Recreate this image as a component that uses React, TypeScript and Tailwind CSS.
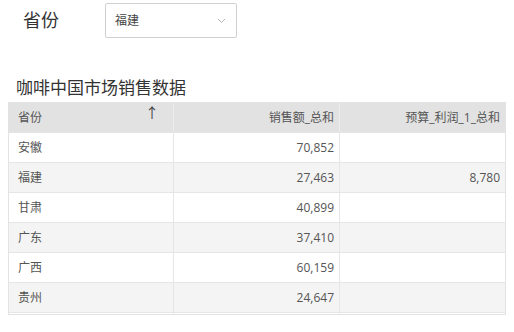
import React from 'react'

const rows = [
  { name: '安徽', sales: '70,852', budget: '' },
  { name: '福建', sales: '27,463', budget: '8,780' },
  { name: '甘肃', sales: '40,899', budget: '' },
  { name: '广东', sales: '37,410', budget: '' },
  { name: '广西', sales: '60,159', budget: '' },
  { name: '贵州', sales: '24,647', budget: '' },
  { name: '', sales: '', budget: '' },
]

const font = { fontFamily: '"Open Sans", "Noto Sans CJK SC", sans-serif' }

export default function App() {
  return (
    <div className="w-[514px] h-[332px] bg-white text-[#333] overflow-hidden" style={font}>
      {/* Filter */}
      <div className="flex items-center pt-[3px] h-[38px]">
        <span className="ml-[23px] w-[82px] text-[18px] text-[#333]">省份</span>
        <div className="flex items-center justify-between w-[132px] h-[35px] border border-[#d0d0d0] rounded-[2px] pl-[9px] pr-[9px]">
          <span className="text-[12px] text-[#444]">福建</span>
          <svg width="9" height="6" viewBox="0 0 9 6" className="mr-[1px]">
            <path d="M1 1l3.5 3.5L8 1" fill="none" stroke="#b5b5b5" strokeWidth="1" />
          </svg>
        </div>
      </div>

      {/* Title */}
      <div className="ml-[16px] mt-[37px] h-[26px] text-[17px] leading-[26px] text-[#333]">咖啡中国市场销售数据</div>

      {/* Table */}
      <div className="ml-[8px] mt-[1px] w-[498px] h-[213px] border border-[#e3e3e3] overflow-hidden text-[12px] text-[#555]">
        <div className="grid grid-cols-[165px_166px_1fr] h-[30px] bg-[#e2e2e2] border-b border-[#e6e6e6]">
          <div className="relative flex items-center pl-[9px] border-r border-[#ececec]">
            省份
            <span className="absolute right-[14px] top-[-1px] text-[14px] text-[#444]">↑</span>
          </div>
          <div className="flex items-center justify-end pr-[5px] border-r border-[#ececec]">销售额_总和</div>
          <div className="flex items-center justify-end pr-[5px]">预算_利润_1_总和</div>
        </div>
        {rows.map((r, i) => (
          <div
            key={i}
            className={`grid grid-cols-[165px_166px_1fr] h-[30px] border-b border-[#e6e6e6] ${i % 2 === 1 ? 'bg-[#f4f4f4]' : 'bg-white'}`}
          >
            <div className="flex items-center pl-[9px] border-r border-[#e6e6e6]">{r.name}</div>
            <div className="flex items-center justify-end pr-[5px] border-r border-[#e6e6e6]">{r.sales}</div>
            <div className="flex items-center justify-end pr-[5px]">{r.budget}</div>
          </div>
        ))}
      </div>
    </div>
  )
}
